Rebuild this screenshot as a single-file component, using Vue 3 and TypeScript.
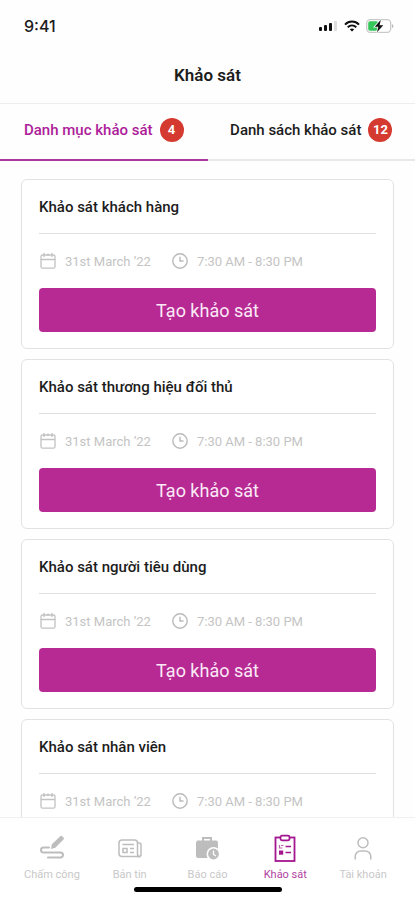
<script setup lang="ts">
import { ref } from 'vue'

interface Tab {
  id: string
  label: string
  count: number
}

interface Survey {
  id: number
  title: string
  date: string
  time: string
}

interface NavItem {
  id: string
  label: string
}

const tabs: Tab[] = [
  { id: 'categories', label: 'Danh mục khảo sát', count: 4 },
  { id: 'list', label: 'Danh sách khảo sát', count: 12 },
]

const titles: string[] = [
  'Khảo sát khách hàng',
  'Khảo sát thương hiệu đối thủ',
  'Khảo sát người tiêu dùng',
  'Khảo sát nhân viên',
]

const surveys: Survey[] = titles.map((title, id) => ({
  id,
  title,
  date: '31st March ’22',
  time: '7:30 AM - 8:30 PM',
}))

const navItems: NavItem[] = [
  { id: 'attendance', label: 'Chấm công' },
  { id: 'news', label: 'Bản tin' },
  { id: 'report', label: 'Báo cáo' },
  { id: 'survey', label: 'Khảo sát' },
  { id: 'account', label: 'Tài khoản' },
]

const activeTab = ref('categories')
const activeNav = ref('survey')
</script>

<template>
  <div class="screen">
    <div class="status">
      <span class="clock">9:41</span>
      <div class="indicators">
        <svg width="19" height="12" viewBox="0 0 19 12">
          <g fill="#111">
            <rect x="0" y="7" width="3" height="4" rx="1" />
            <rect x="5" y="5" width="3" height="6" rx="1" />
            <rect x="10" y="3" width="3" height="8" rx="1" />
          </g>
          <rect x="15" y="1" width="3" height="10" rx="1" fill="#ddd" />
        </svg>
        <svg width="16" height="12" viewBox="0 0 16 12" fill="none" stroke="#111" stroke-width="2">
          <path d="M1 4.6C5 .6 11 .6 15 4.6" />
          <path d="M3.7 7.3C6.2 5 9.800 5 12.300 7.300" />
          <path d="M8 11.600L5.800 9.400Q8 7.700 10.200 9.400Z" fill="#111" stroke="none" />
        </svg>
        <svg width="28" height="14" viewBox="0 0 28 14">
          <rect x=".7" y=".7" width="24" height="12.600" rx="3.500" fill="#fff" stroke="#c9c9c9" stroke-width="1.300" />
          <path d="M26 5v4.200c2-.8 2-3.400 0-4.200Z" fill="#bbb" />
          <rect x="2.200" y="2.200" width="10" height="9.600" rx="1.800" fill="#35c759" />
          <path d="M14.800 .8L8.800 7.800H12.300L11 13.200L17.300 6.200H13.600Z" fill="#111" stroke="#fff" stroke-width="1.600" paint-order="stroke" />
        </svg>
      </div>
    </div>

    <header class="header">
      <h1>Khảo sát</h1>
    </header>

    <div class="tabs" role="tablist">
      <button
        v-for="tab in tabs"
        :key="tab.id"
        type="button"
        role="tab"
        class="tab"
        :class="{ active: tab.id === activeTab }"
        :aria-selected="tab.id === activeTab"
        @click="activeTab = tab.id"
      >
        <span>{{ tab.label }}</span>
        <span class="badge">{{ tab.count }}</span>
      </button>
    </div>

    <main class="list">
      <article v-for="survey in surveys" :key="survey.id" class="card">
        <h2>{{ survey.title }}</h2>
        <div class="meta">
          <span class="meta-item">
            <svg width="18" height="18" viewBox="0 0 18 18" fill="none" stroke="#c2c2c2" stroke-width="1.300">
              <rect x="2" y="3" width="14" height="13.200" rx="1.500" />
              <path d="M2 7.500H16M5 1V5M13 1V5M9 1.500V4" />
            </svg>
            <span>{{ survey.date }}</span>
          </span>
          <span class="meta-item">
            <svg width="18" height="18" viewBox="0 0 18 18" fill="none" stroke="#bababa" stroke-width="1.400">
              <circle cx="9" cy="9" r="7.200" />
              <path d="M9 4.800V9H12.500" />
            </svg>
            <span>{{ survey.time }}</span>
          </span>
        </div>
        <button type="button" class="create">Tạo khảo sát</button>
      </article>
    </main>

    <footer class="footer">
      <nav class="nav">
        <a
          v-for="item in navItems"
          :key="item.id"
          href="#"
          class="nav-item"
          :class="{ active: item.id === activeNav }"
          @click.prevent="activeNav = item.id"
        >
          <svg v-if="item.id === 'attendance'" width="28" height="28" viewBox="0 0 28 28" fill="none" stroke="#bdbdbd">
            <path d="M11 13.500H5.500a2.500 2.500 0 0 0 0 5H22.500a2.500 2.500 0 0 1 0 5H10" stroke-width="2" stroke-linecap="round" />
            <path d="M13 15L13.800 10.300L22.300 2.200a1.300 1.300 0 0 1 1.800 0L25.500 3.600a1.300 1.300 0 0 1 0 1.800L17.300 13.700Z" fill="#bdbdbd" stroke="none" />
          </svg>
          <svg v-else-if="item.id === 'news'" width="28" height="28" viewBox="0 0 28 28" fill="none" stroke="#bdbdbd" stroke-width="1.500">
            <path d="M22 22.500H6a3 3 0 0 1-3-3V9a3 3 0 0 1 3-3H18.500a3 3 0 0 1 3 3V20a2.500 2.500 0 0 0 2.500 2.500" />
            <path d="M21.500 9H23a2 2 0 0 1 2 2V20.500a2 2 0 0 1-3 2" />
            <path d="M6.500 10.500H18M14 14.500H18M14 18.500H18" />
            <rect x="7" y="14.500" width="4" height="4" />
          </svg>
          <svg v-else-if="item.id === 'report'" width="28" height="28" viewBox="0 0 28 28">
            <path d="M10 7V4H18V7" fill="none" stroke="#bdbdbd" stroke-width="2" />
            <path d="M4 6.500H23a2 2 0 0 1 2 2V24H5a2 2 0 0 1-2-2V8.500Z" fill="#bdbdbd" />
            <circle cx="20.500" cy="20" r="7" fill="#fff" />
            <circle cx="20.500" cy="20" r="5.400" fill="#bdbdbd" />
            <path d="M20.500 16.500V20.500L23 22" fill="none" stroke="#fff" stroke-width="1.300" />
          </svg>
          <svg v-else-if="item.id === 'survey'" width="28" height="28" viewBox="0 0 28 28" fill="none" stroke="#a3168f" stroke-width="1.800">
            <rect x="4.500" y="3.500" width="19" height="23.500" />
            <rect x="9.500" y="1.700" width="9" height="4.600" rx="1.500" fill="#fff" />
            <path d="M14.500 12.500H20M14.500 18.500H20" stroke-width="1.600" />
            <path d="M8.500 11V14H11.500M10 11.500H12.500" stroke-width="1.200" stroke="#c065b3" />
            <rect x="8" y="16.500" width="4.200" height="4.200" fill="#a3168f" stroke="none" />
          </svg>
          <svg v-else width="28" height="28" viewBox="0 0 28 28" fill="none" stroke="#bdbdbd" stroke-width="1.500">
            <circle cx="14" cy="8.800" r="5" />
            <path d="M6.200 25.500V22.500a5.500 5.500 0 0 1 5.500-5.500H16.300a5.500 5.500 0 0 1 5.500 5.500V25.500" />
          </svg>
          <span>{{ item.label }}</span>
        </a>
      </nav>
      <div class="home-bar"></div>
    </footer>
  </div>
</template>

<style>
body {
  margin: 0;
  background: #fff;
}
</style>

<style scoped>
.screen {
  display: flex;
  flex-direction: column;
  height: 100vh;
  overflow: hidden;
  background: #fefefe;
  color: #1c1c1c;
  font-family: Roboto, "Liberation Sans", sans-serif;
}

button {
  margin: 0;
  padding: 0;
  border: 0;
  background: none;
  font: inherit;
  cursor: pointer;
}

svg {
  display: block;
  flex: none;
}

.status {
  display: flex;
  flex: none;
  align-items: center;
  justify-content: space-between;
  height: 52px;
  padding: 0 21px 0 24px;
}

.clock {
  font-family: Inter, sans-serif;
  font-size: 16px;
  font-weight: 500;
}

.indicators {
  display: flex;
  align-items: center;
  gap: 6px;
}

.header {
  display: flex;
  flex: none;
  align-items: center;
  justify-content: center;
  height: 46px;
  padding-bottom: 5px;
  border-bottom: 1px solid #eee;
}

h1 {
  margin: 0;
  font-size: 17px;
  font-weight: 600;
}

.tabs {
  display: grid;
  flex: none;
  grid-template-columns: 1fr 1fr;
  height: 57px;
}

.tab {
  display: flex;
  align-items: center;
  justify-content: center;
  gap: 7px;
  padding-bottom: 4px;
  border-bottom: 2px solid #e8e8e8;
  color: #1c1c1c;
  font-size: 15px;
  font-weight: 500;
  white-space: nowrap;
}

.tab.active {
  border-color: #a9399c;
  color: #ad1c99;
}

.badge {
  display: flex;
  align-items: center;
  justify-content: center;
  width: 24px;
  height: 24px;
  border-radius: 50%;
  background: #d43a30;
  color: #fff;
  font-size: 13px;
  font-weight: 700;
}

.list {
  display: flex;
  flex: 1;
  flex-direction: column;
  gap: 10px;
  min-height: 0;
  padding: 18px 21px 0;
  overflow-y: auto;
  scrollbar-width: none;
}

.card {
  flex: none;
  padding: 2px 17px 16px;
  border: 1px solid #e2e2e2;
  border-radius: 6px;
  background: #fff;
}

h2 {
  margin: 0;
  border-bottom: 1px solid #e0e0e0;
  font-size: 15px;
  font-weight: 500;
  line-height: 51px;
}

.meta {
  display: flex;
  align-items: center;
  gap: 20px;
  height: 54px;
  color: #c4c4c4;
  font-size: 13px;
}

.meta-item {
  display: flex;
  align-items: center;
  gap: 8px;
}

.create {
  display: block;
  width: 100%;
  height: 44px;
  border-radius: 4px;
  background: #b72a94;
  color: #fbe9f6;
  font-size: 18px;
}

.footer {
  flex: none;
  padding-bottom: 8px;
  border-top: 1px solid #f0f0f0;
  background: #fff;
}

.nav {
  display: flex;
  padding: 16px 13px 0;
}

.nav-item {
  display: flex;
  flex: 1;
  flex-direction: column;
  align-items: center;
  gap: 5px;
  color: #c8c8c8;
  font-size: 11px;
  line-height: 16px;
  text-decoration: none;
}

.nav-item.active {
  color: #b0429f;
}

.home-bar {
  width: 148px;
  height: 5px;
  margin: 4px auto 0;
  border-radius: 3px;
  background: #000;
}
</style>
